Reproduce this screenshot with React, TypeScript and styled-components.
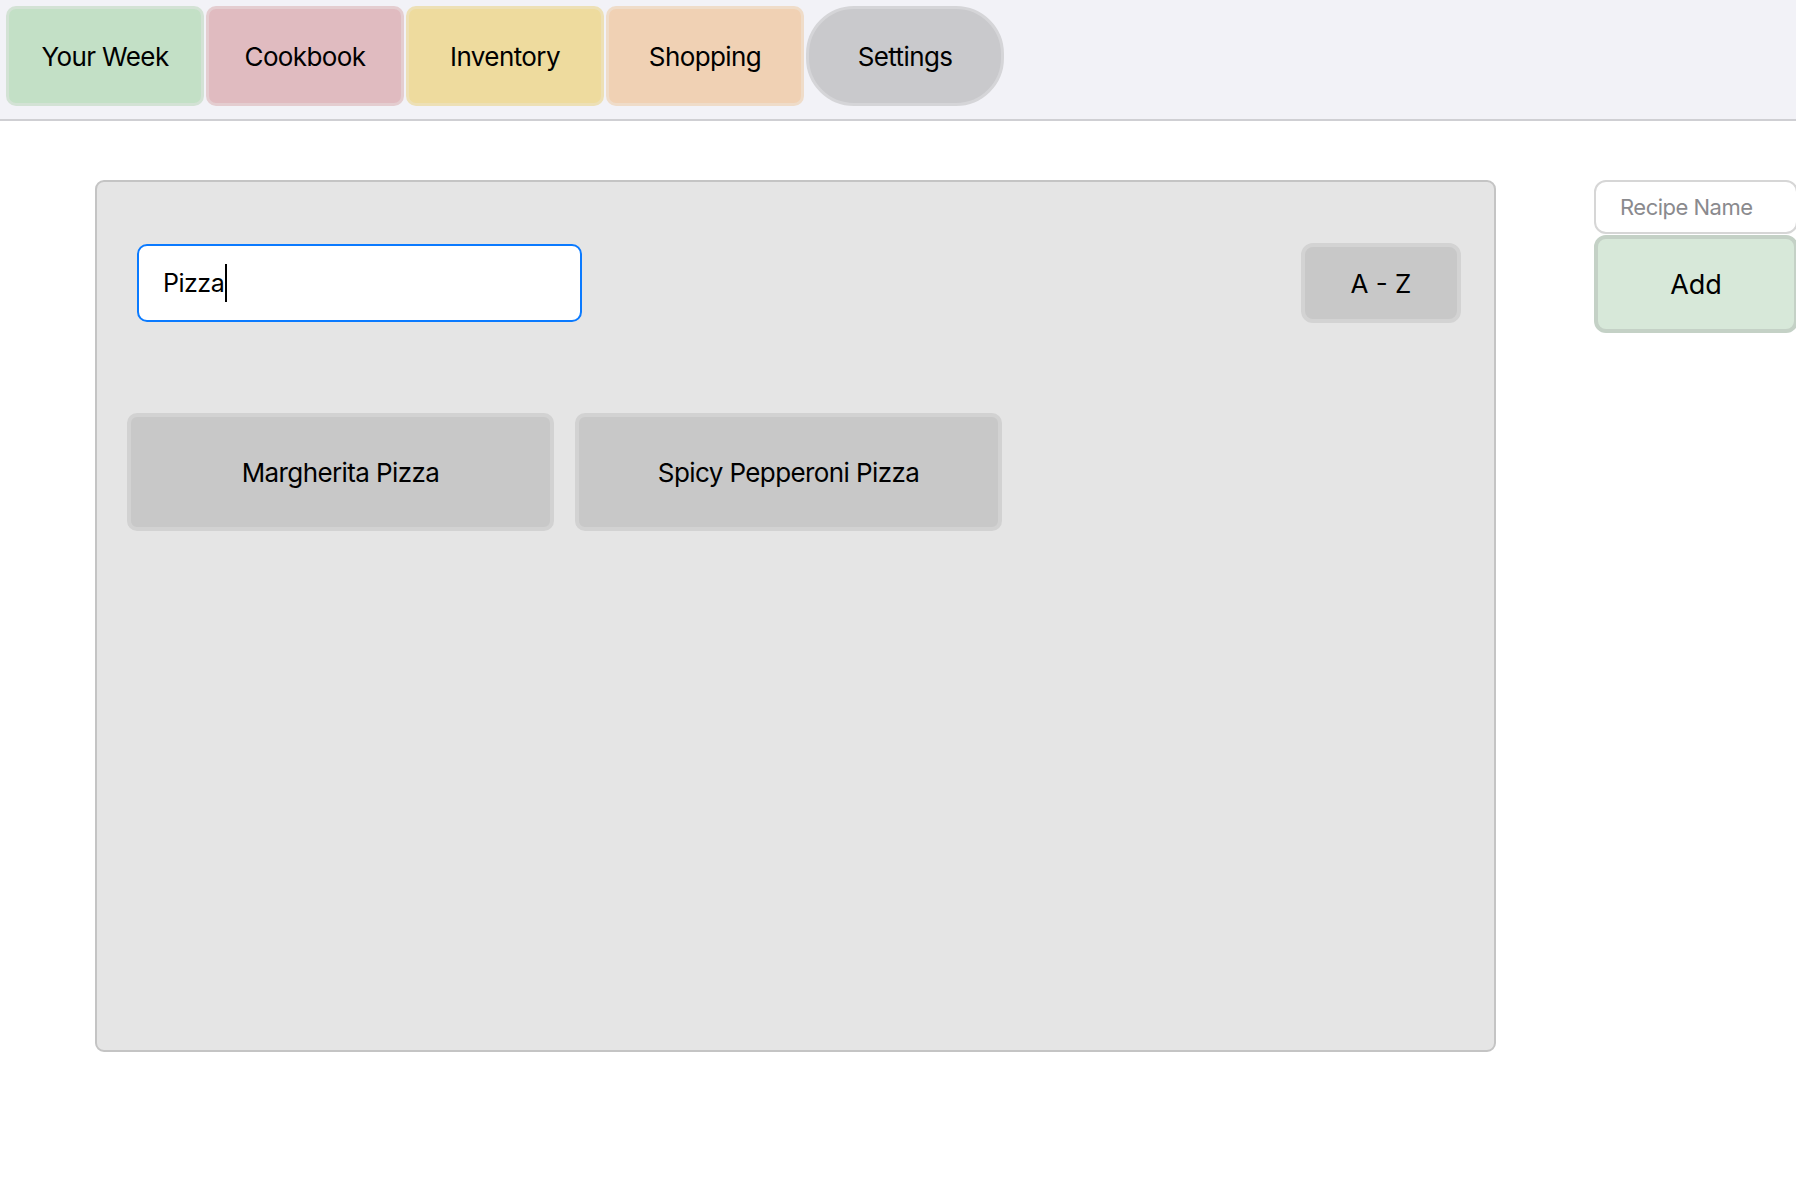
import styled, { createGlobalStyle } from "styled-components";

const GlobalStyle = createGlobalStyle`
  html, body {
    margin: 0;
    padding: 0;
    background: #ffffff;
    overflow: hidden;
  }
  body {
    font-family: Inter, "Noto Sans", "Liberation Sans", sans-serif;
    color: #000;
  }
`;

const tabs = [
  { label: "Your Week", bg: "#c3e0c6", ring: "#d3e2d5", pill: false },
  { label: "Cookbook", bg: "#e0bbc0", ring: "#e4cdd0", pill: false },
  { label: "Inventory", bg: "#eedb9e", ring: "#ede0b6", pill: false },
  { label: "Shopping", bg: "#f0d1b4", ring: "#efdcc9", pill: false },
  { label: "Settings", bg: "#c9c9cc", ring: "#d5d5d8", pill: true },
];

const recipes = ["Margherita Pizza", "Spicy Pepperoni Pizza"];

const Page = styled.div`
  width: 1796px;
  height: 1194px;
  overflow: hidden;
`;

const TabBar = styled.nav`
  display: flex;
  gap: 2px;
  height: 121px;
  box-sizing: border-box;
  padding: 6px 0 0 6px;
  background: #f2f2f7;
  border-bottom: 2px solid #cfcfd3;
`;

const Tab = styled.button<{ $bg: string; $ring: string; $pill: boolean }>`
  width: 198px;
  height: 100px;
  box-sizing: border-box;
  border: 3px solid ${({ $ring }) => $ring};
  border-radius: ${({ $pill }) => ($pill ? "48px" : "10px")};
  background: ${({ $bg }) => $bg};
  font-family: Inter, "Noto Sans", sans-serif;
  font-size: 26px;
  letter-spacing: -0.6px;
  color: #000;
  padding: 0;
  cursor: pointer;
`;

const Main = styled.main`
  display: flex;
  align-items: flex-start;
  gap: 98px;
  padding: 59px 0 0 95px;
`;

const Panel = styled.section`
  flex: 0 0 1401px;
  height: 872px;
  box-sizing: border-box;
  background: #e5e5e5;
  border: 2px solid #c4c4c4;
  border-radius: 9px;
  padding: 61px 33px 0 30px;
`;

const SearchRow = styled.div`
  display: flex;
  justify-content: space-between;
  align-items: center;
  padding-left: 10px;
`;

const SearchField = styled.div`
  width: 445px;
  height: 78px;
  box-sizing: border-box;
  display: flex;
  align-items: center;
  padding-left: 24px;
  background: #fff;
  border: 2px solid #0a7aff;
  border-radius: 10px;
  font-size: 25px;
  letter-spacing: -0.5px;
`;

const Caret = styled.span`
  display: inline-block;
  width: 2px;
  height: 38px;
  margin-left: 1px;
  background: #000;
`;

const SortButton = styled.button`
  width: 160px;
  height: 80px;
  box-sizing: border-box;
  background: #c8c8c8;
  border: 4px solid #d3d3d3;
  border-radius: 12px;
  font-family: Inter, "Noto Sans", sans-serif;
  font-size: 26px;
  color: #000;
  cursor: pointer;
`;

const RecipeGrid = styled.div`
  display: flex;
  gap: 21px;
  margin-top: 90px;
`;

const RecipeCard = styled.button`
  width: 427px;
  height: 118px;
  box-sizing: border-box;
  background: #c8c8c8;
  border: 4px solid #d2d2d2;
  border-radius: 10px;
  font-family: Inter, "Noto Sans", sans-serif;
  font-size: 26px;
  letter-spacing: -0.6px;
  color: #000;
  cursor: pointer;
`;

const SideColumn = styled.aside`
  flex: 0 0 204px;
  width: 204px;
  min-width: 0;
  display: flex;
  flex-direction: column;
  gap: 1px;
`;

const NameInput = styled.input`
  width: 100%;
  min-width: 0;
  height: 54px;
  box-sizing: border-box;
  border: 2px solid #d6d6d6;
  border-radius: 12px;
  padding: 0 24px;
  font-family: Inter, "Noto Sans", sans-serif;
  font-size: 22px;
  letter-spacing: -0.5px;
  outline: none;

  &::placeholder {
    color: #8a8a8e;
  }
`;

const AddButton = styled.button`
  width: 100%;
  height: 98px;
  box-sizing: border-box;
  background: #d7e8d9;
  border: 4px solid #c4d1c6;
  border-radius: 12px;
  font-family: Inter, "Noto Sans", sans-serif;
  font-size: 27px;
  color: #000;
  cursor: pointer;
`;

export default function App() {
  return (
    <Page>
      <GlobalStyle />
      <TabBar>
        {tabs.map((t) => (
          <Tab key={t.label} $bg={t.bg} $ring={t.ring} $pill={t.pill}>
            {t.label}
          </Tab>
        ))}
      </TabBar>

      <Main>
        <Panel>
          <SearchRow>
            <SearchField>
              Pizza
              <Caret />
            </SearchField>
            <SortButton>A - Z</SortButton>
          </SearchRow>

          <RecipeGrid>
            {recipes.map((r) => (
              <RecipeCard key={r}>{r}</RecipeCard>
            ))}
          </RecipeGrid>
        </Panel>

        <SideColumn>
          <NameInput placeholder="Recipe Name" />
          <AddButton>Add</AddButton>
        </SideColumn>
      </Main>
    </Page>
  );
}
